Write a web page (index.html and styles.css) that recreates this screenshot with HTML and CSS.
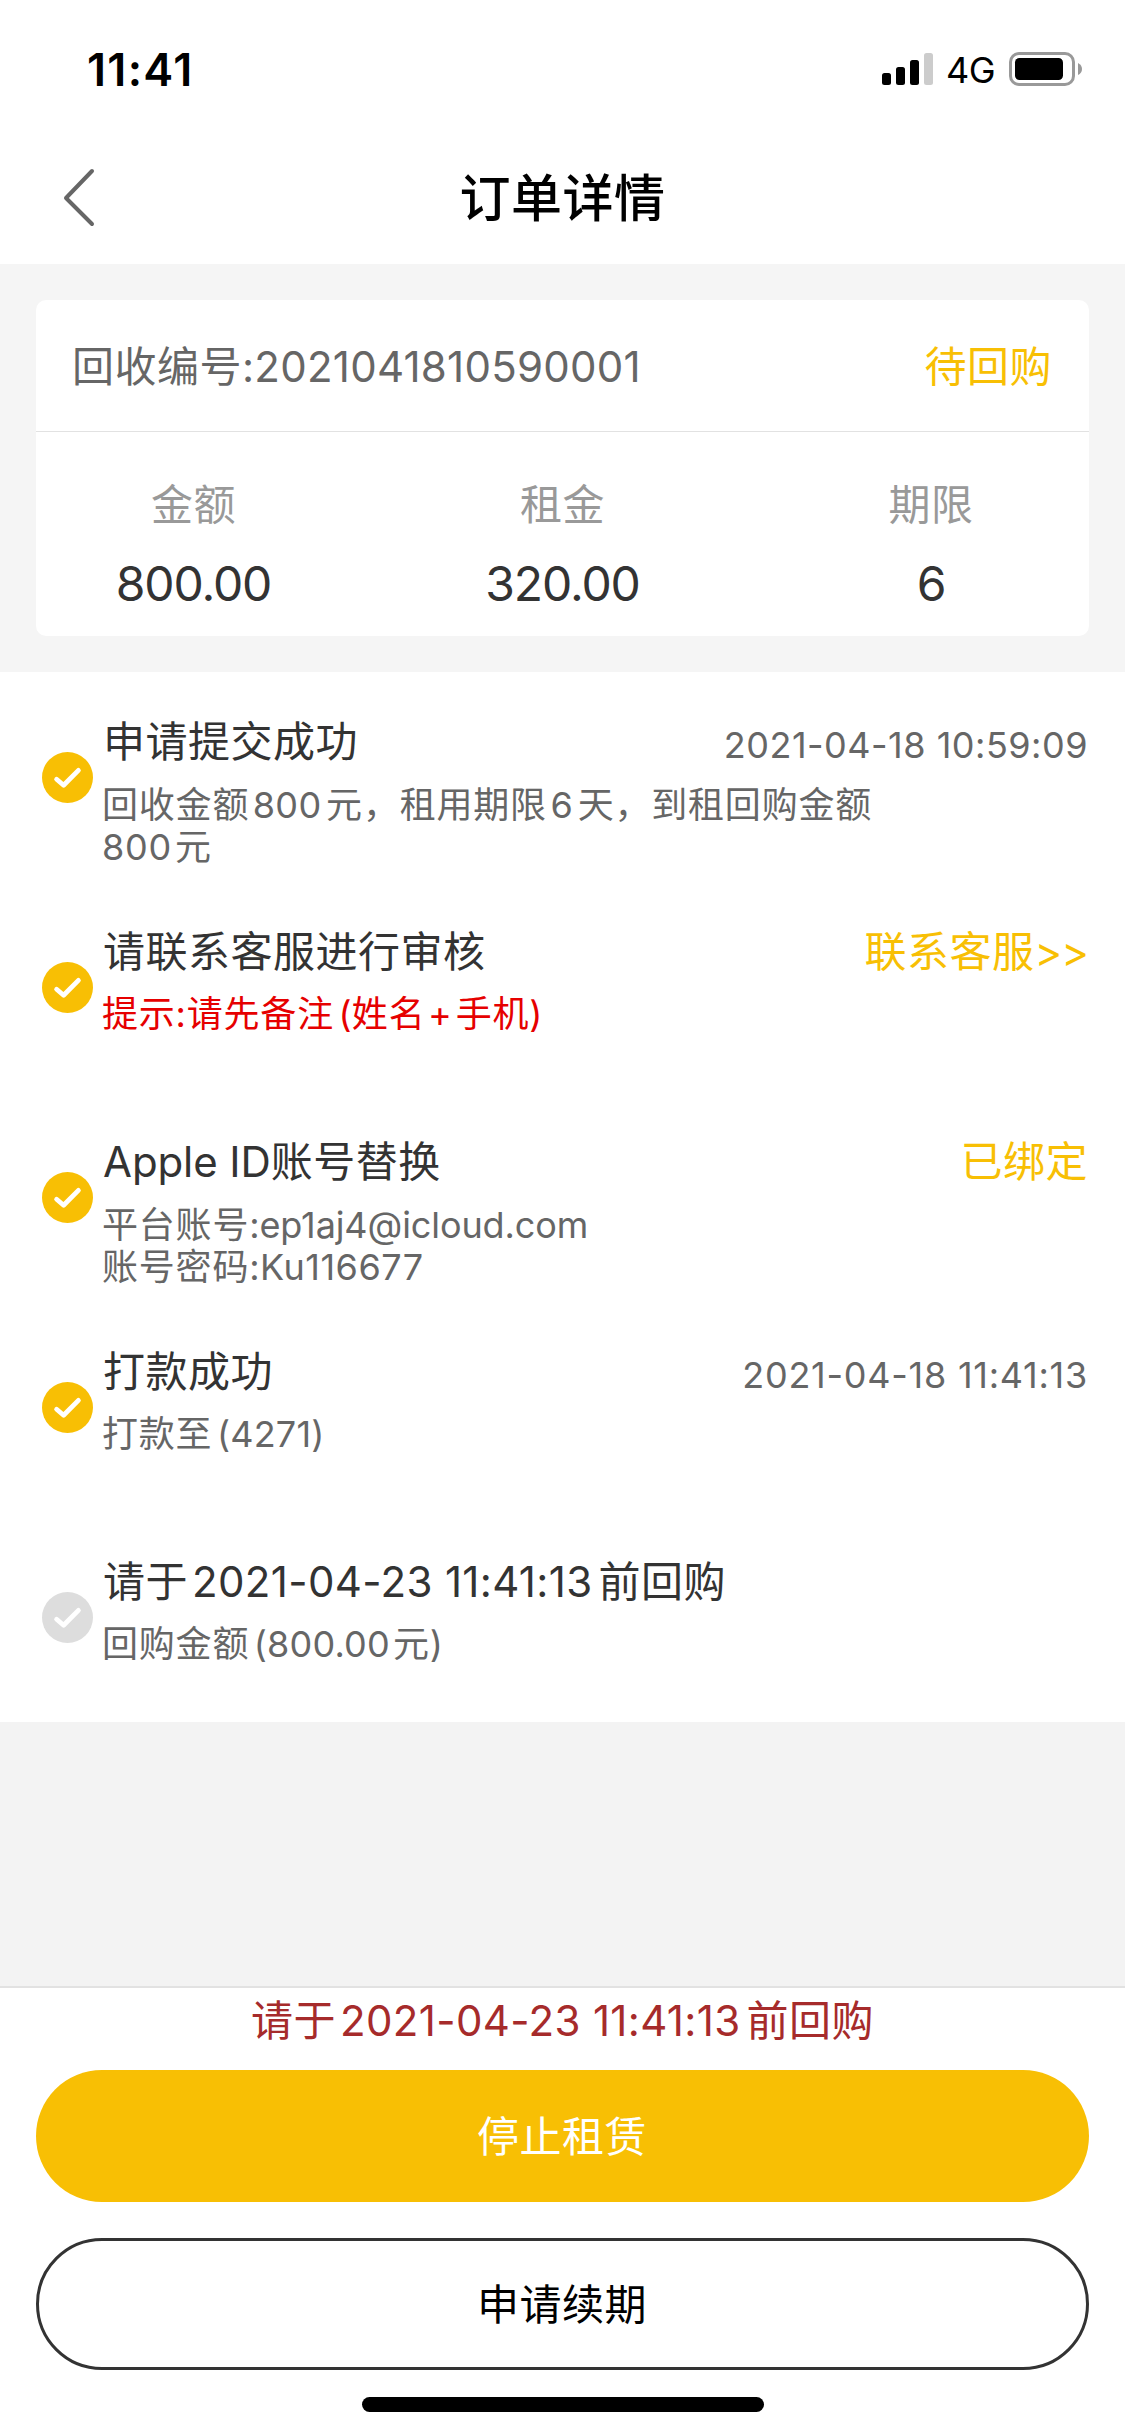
FILE: index.html
```html
<!DOCTYPE html>
<html lang="zh-CN">
<head>
<meta charset="utf-8">
<title>订单详情</title>
<link rel="stylesheet" href="styles.css">
</head>
<body>
<svg class="defs" width="0" height="0" aria-hidden="true">
  <symbol id="check" viewBox="0 0 51 51">
    <circle cx="25.5" cy="25.5" r="25.5" fill="currentColor"/>
    <path d="M14.6 27.2 L21.6 33.2 L36.4 18.4" fill="none" stroke="#fff" stroke-width="4.8" stroke-linecap="round" stroke-linejoin="round"/>
  </symbol>
</svg>
<header class="top">
  <div class="status">
    <span class="clock">11:41</span>
    <div class="signals">
      <svg width="51" height="32" viewBox="0 0 51 32">
        <rect x="0" y="20" width="9" height="12" rx="2.5"/>
        <rect x="14" y="14" width="9" height="18" rx="2.5"/>
        <rect x="28" y="7" width="9" height="25" rx="2.5"/>
        <rect x="42" y="0" width="9" height="32" rx="2.5" fill="#ccc"/>
      </svg>
      <span class="network">4G</span>
      <svg width="74" height="34" viewBox="0 0 74 34">
        <rect x="1.5" y="1.5" width="63" height="31" rx="8.5" fill="none" stroke="#999" stroke-width="3"/>
        <rect x="6" y="6" width="48" height="22" rx="4.5"/>
        <path d="M69 11 Q73 13 73 17 Q73 21 69 23 Z" fill="#999"/>
      </svg>
    </div>
  </div>
  <nav class="nav">
    <svg class="back" width="34" height="60" viewBox="0 0 34 60"><path d="M31 3 L5 30 L31 56" fill="none" stroke="#666" stroke-width="4" stroke-linecap="round" stroke-linejoin="round"/></svg>
    <h1 class="title">订单详情</h1>
  </nav>
</header>
<main class="content">
  <section class="card">
    <div class="card-head">
      <span>回收编号<span class="order-no">:2021041810590001</span></span>
      <span class="accent">待回购</span>
    </div>
    <div class="figures">
      <div class="figure"><span class="label">金额</span><span class="value">800.00</span></div>
      <div class="figure"><span class="label">租金</span><span class="value">320.00</span></div>
      <div class="figure"><span class="label">期限</span><span class="value">6</span></div>
    </div>
  </section>
  <section class="steps">
    <div class="step">
      <svg class="icon"><use href="#check"/></svg>
      <div class="body">
        <div class="line"><span class="name">申请提交成功</span><span class="time">2021-04-18 10:59:09</span></div>
        <p class="detail two">回收金额<span class="n">800</span>元，租用期限<span class="n">6</span>天，到租回购金额<br>800<span class="unit">元</span></p>
      </div>
    </div>
    <div class="step">
      <svg class="icon"><use href="#check"/></svg>
      <div class="body">
        <div class="line"><span class="name">请联系客服进行审核</span><span class="accent">联系客服<span class="more">&gt;&gt;</span></span></div>
        <p class="detail warn">提示:请先备注<span class="before">(</span>姓名<span class="n">+</span>手机)</p>
      </div>
    </div>
    <div class="step">
      <svg class="icon"><use href="#check"/></svg>
      <div class="body">
        <div class="line"><span class="name"><span class="latin">Apple ID</span>账号替换</span><span class="accent">已绑定</span></div>
        <p class="detail two">平台账号<span class="latin">:ep1aj4@icloud.com</span><br>账号密码<span class="secret">:Ku116677</span></p>
      </div>
    </div>
    <div class="step">
      <svg class="icon"><use href="#check"/></svg>
      <div class="body">
        <div class="line"><span class="name">打款成功</span><span class="time loose">2021-04-18 11:41:13</span></div>
        <p class="detail">打款至<span class="before">(4271)</span></p>
      </div>
    </div>
    <div class="step pending">
      <svg class="icon"><use href="#check"/></svg>
      <div class="body">
        <div class="line"><span class="name">请于<span class="stamp">2021-04-23 11:41:13</span>前回购</span></div>
        <p class="detail">回购金额<span class="before">(800.00</span><span class="unit">元)</span></p>
      </div>
    </div>
  </section>
</main>
<footer class="actions">
  <p class="notice">请于<span class="stamp">2021-04-23 11:41:13</span>前回购</p>
  <button class="btn primary">停止租赁</button>
  <button class="btn outline">申请续期</button>
  <div class="home"></div>
</footer>
</body>
</html>
```
FILE: styles.css
```css
* { box-sizing: border-box; }
body {
  margin: 0;
  width: 1125px;
  height: 2436px;
  display: flex;
  flex-direction: column;
  background: #f3f3f3;
  color: #333;
  font-family: Inter, "Noto Sans CJK SC", sans-serif;
  font-size: 42px;
  letter-spacing: 0.5px;
  overflow: hidden;
}
h1, p { margin: 0; }
.defs { position: absolute; }
.top { height: 264px; background: #fff; color: #000; }
.status {
  height: 132px;
  padding: 6px 42px 0 87px;
  display: flex;
  align-items: center;
  justify-content: space-between;
}
.clock { font-size: 45px; font-weight: 600; letter-spacing: 1.3px; }
.signals { display: flex; align-items: center; }
.network { margin: 2px 14px 0 13px; font-size: 36px; letter-spacing: -0.6px; }
.nav {
  height: 132px;
  padding-left: 61px;
  display: grid;
  grid-template-columns: 34px 1fr 95px;
  align-items: center;
}
.title { padding-top: 2px; text-align: center; font-size: 51px; font-weight: 500; line-height: 72px; }
.content {
  flex: 1;
  padding-top: 36px;
  background: linear-gradient(#f5f5f5 408px, #f3f3f3 408px);
}
.card { margin: 0 36px; background: #fff; border-radius: 10px; height: 336px; }
.card-head {
  height: 132px;
  padding: 0 37px 5px 36px;
  border-bottom: 1px solid #e2e2e2;
  display: flex;
  align-items: center;
  justify-content: space-between;
  color: #666;
}
.order-no { letter-spacing: 0.25px; }
.accent { color: #f8bf04; }
.figures { display: grid; grid-template-columns: repeat(3, 1fr); }
.figure { display: flex; flex-direction: column; align-items: center; padding-top: 43px; }
.figure:first-child { padding-right: 36px; }
.figure:last-child { padding-left: 35px; }
.label { color: #999; line-height: 60px; }
.value { font-size: 48px; line-height: 60px; margin-top: 19px; letter-spacing: -1.1px; }
.steps { margin-top: 36px; background: #fff; }
.step { height: 210px; padding: 0 37px 0 42px; display: flex; align-items: center; color: #f8bf04; }
.pending { color: #ddd; }
.icon { width: 51px; height: 51px; flex: none; }
.body { flex: 1; height: 210px; padding: 36px 0 0 10px; color: #333; }
.line { height: 60px; display: flex; align-items: center; justify-content: space-between; }
.more { letter-spacing: -1px; }
.time { font-size: 36px; color: #666; padding-top: 13px; }
.loose { letter-spacing: 0.75px; }
.detail { margin-top: 15px; margin-left: -1px; font-size: 36px; line-height: 42px; letter-spacing: 0.8px; color: #666; }
.two { margin-top: 16px; }
.warn { color: #e60000; }
.n { margin: 0 4.5px 0 3.5px; letter-spacing: 0.4px; }
.warn .n { margin: 0 3.5px 0 2.5px; }
.latin { letter-spacing: -0.1px; }
.secret { letter-spacing: 0.5px; }
.before { margin-left: 4.5px; letter-spacing: 0.2px; }
.unit { margin-left: 3px; }
.stamp { margin: 0 6px 0 4px; letter-spacing: 0.35px; }
.actions { height: 450px; padding: 0 36px; background: #fff; border-top: 2px solid #e2e2e2; }
.notice { text-align: center; color: #a62b2b; line-height: 60px; padding-top: 3px; height: 82px; }
.btn {
  display: block;
  width: 100%;
  height: 132px;
  border: 0;
  border-radius: 66px;
  padding: 0 1px 6px 0;
  font: inherit;
  letter-spacing: inherit;
}
.primary { background: #f8bf04; color: #fff; }
.outline { margin-top: 36px; background: #fff; color: #000; border: 3px solid #333; }
.home { width: 402px; height: 15px; margin: 27px auto 0; border-radius: 8px; background: #000; }
```
